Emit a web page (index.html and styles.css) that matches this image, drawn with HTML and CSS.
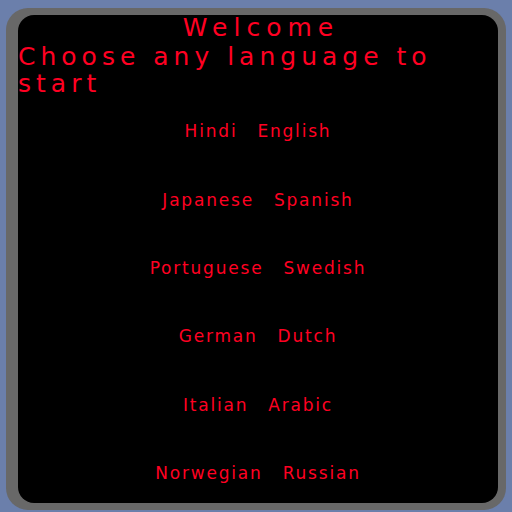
FILE: index.html
```html
<!DOCTYPE html>
<html lang="en">
<head>
  <meta charset="UTF-8">
  <meta name="viewport" content="width=device-width, initial-scale=1.0">
  <title>Welcome</title>
  <link rel="stylesheet" href="styles.css">
</head>
<body>
  <div class="phone-frame">
    <div class="screen">
      <div class="page-header">
        <h1 class="welcome-title">Welcome</h1>
        <h2 class="choose-title">Choose any language to start</h2>
      </div>

      <div class="language-list">
        <div class="language-row">
          <span class="language-item">Hindi</span>
          <span class="language-item">English</span>
        </div>
        <div class="language-row">
          <span class="language-item">Japanese</span>
          <span class="language-item">Spanish</span>
        </div>
        <div class="language-row">
          <span class="language-item">Portuguese</span>
          <span class="language-item">Swedish</span>
        </div>
        <div class="language-row">
          <span class="language-item">German</span>
          <span class="language-item">Dutch</span>
        </div>
        <div class="language-row">
          <span class="language-item">Italian</span>
          <span class="language-item">Arabic</span>
        </div>
        <div class="language-row">
          <span class="language-item">Norwegian</span>
          <span class="language-item">Russian</span>
        </div>
      </div>
    </div>
  </div>
</body>
</html>
```

FILE: styles.css
```css
:root {
  --bg-desktop: #6b7fab;
  --frame-gray: #686868;
  --screen-bg: #000000;
  --text-red: #ff0022;
  --font-main: 'DejaVu Sans', Verdana, sans-serif;
}

* {
  margin: 0;
  padding: 0;
  box-sizing: border-box;
}

body {
  background-color: var(--bg-desktop);
  font-family: var(--font-main);
  color: var(--text-red);
  width: 512px;
  height: 512px;
  overflow: hidden;
}

/* Gray device bezel */
.phone-frame {
  margin: 8px 0 0 6px;
  width: 500px;
  height: 502px;
  padding: 8px 8px 6px 12px;
  background-color: var(--frame-gray);
  border-radius: 22px;
}

.screen {
  width: 480px;
  height: 488px;
  background-color: var(--screen-bg);
  border-radius: 16px;
}

.page-header {
  margin-top: -1px;
  font-size: 25px;
}

.welcome-title {
  font-size: inherit;
  font-weight: normal;
  line-height: 26px;
  letter-spacing: 6px;
  text-align: center;
  padding-left: 6px;
}

.choose-title {
  margin-top: 2px;
  font-size: inherit;
  font-weight: normal;
  line-height: 27px;
  letter-spacing: 5px;
  padding-right: 30px;
}

.language-list {
  display: flex;
  flex-direction: column;
}

.language-row {
  height: 68.4px;
  display: flex;
  justify-content: center;
  align-items: center;
  gap: 20px;
  font-size: 17px;
  letter-spacing: 1.8px;
}
```
